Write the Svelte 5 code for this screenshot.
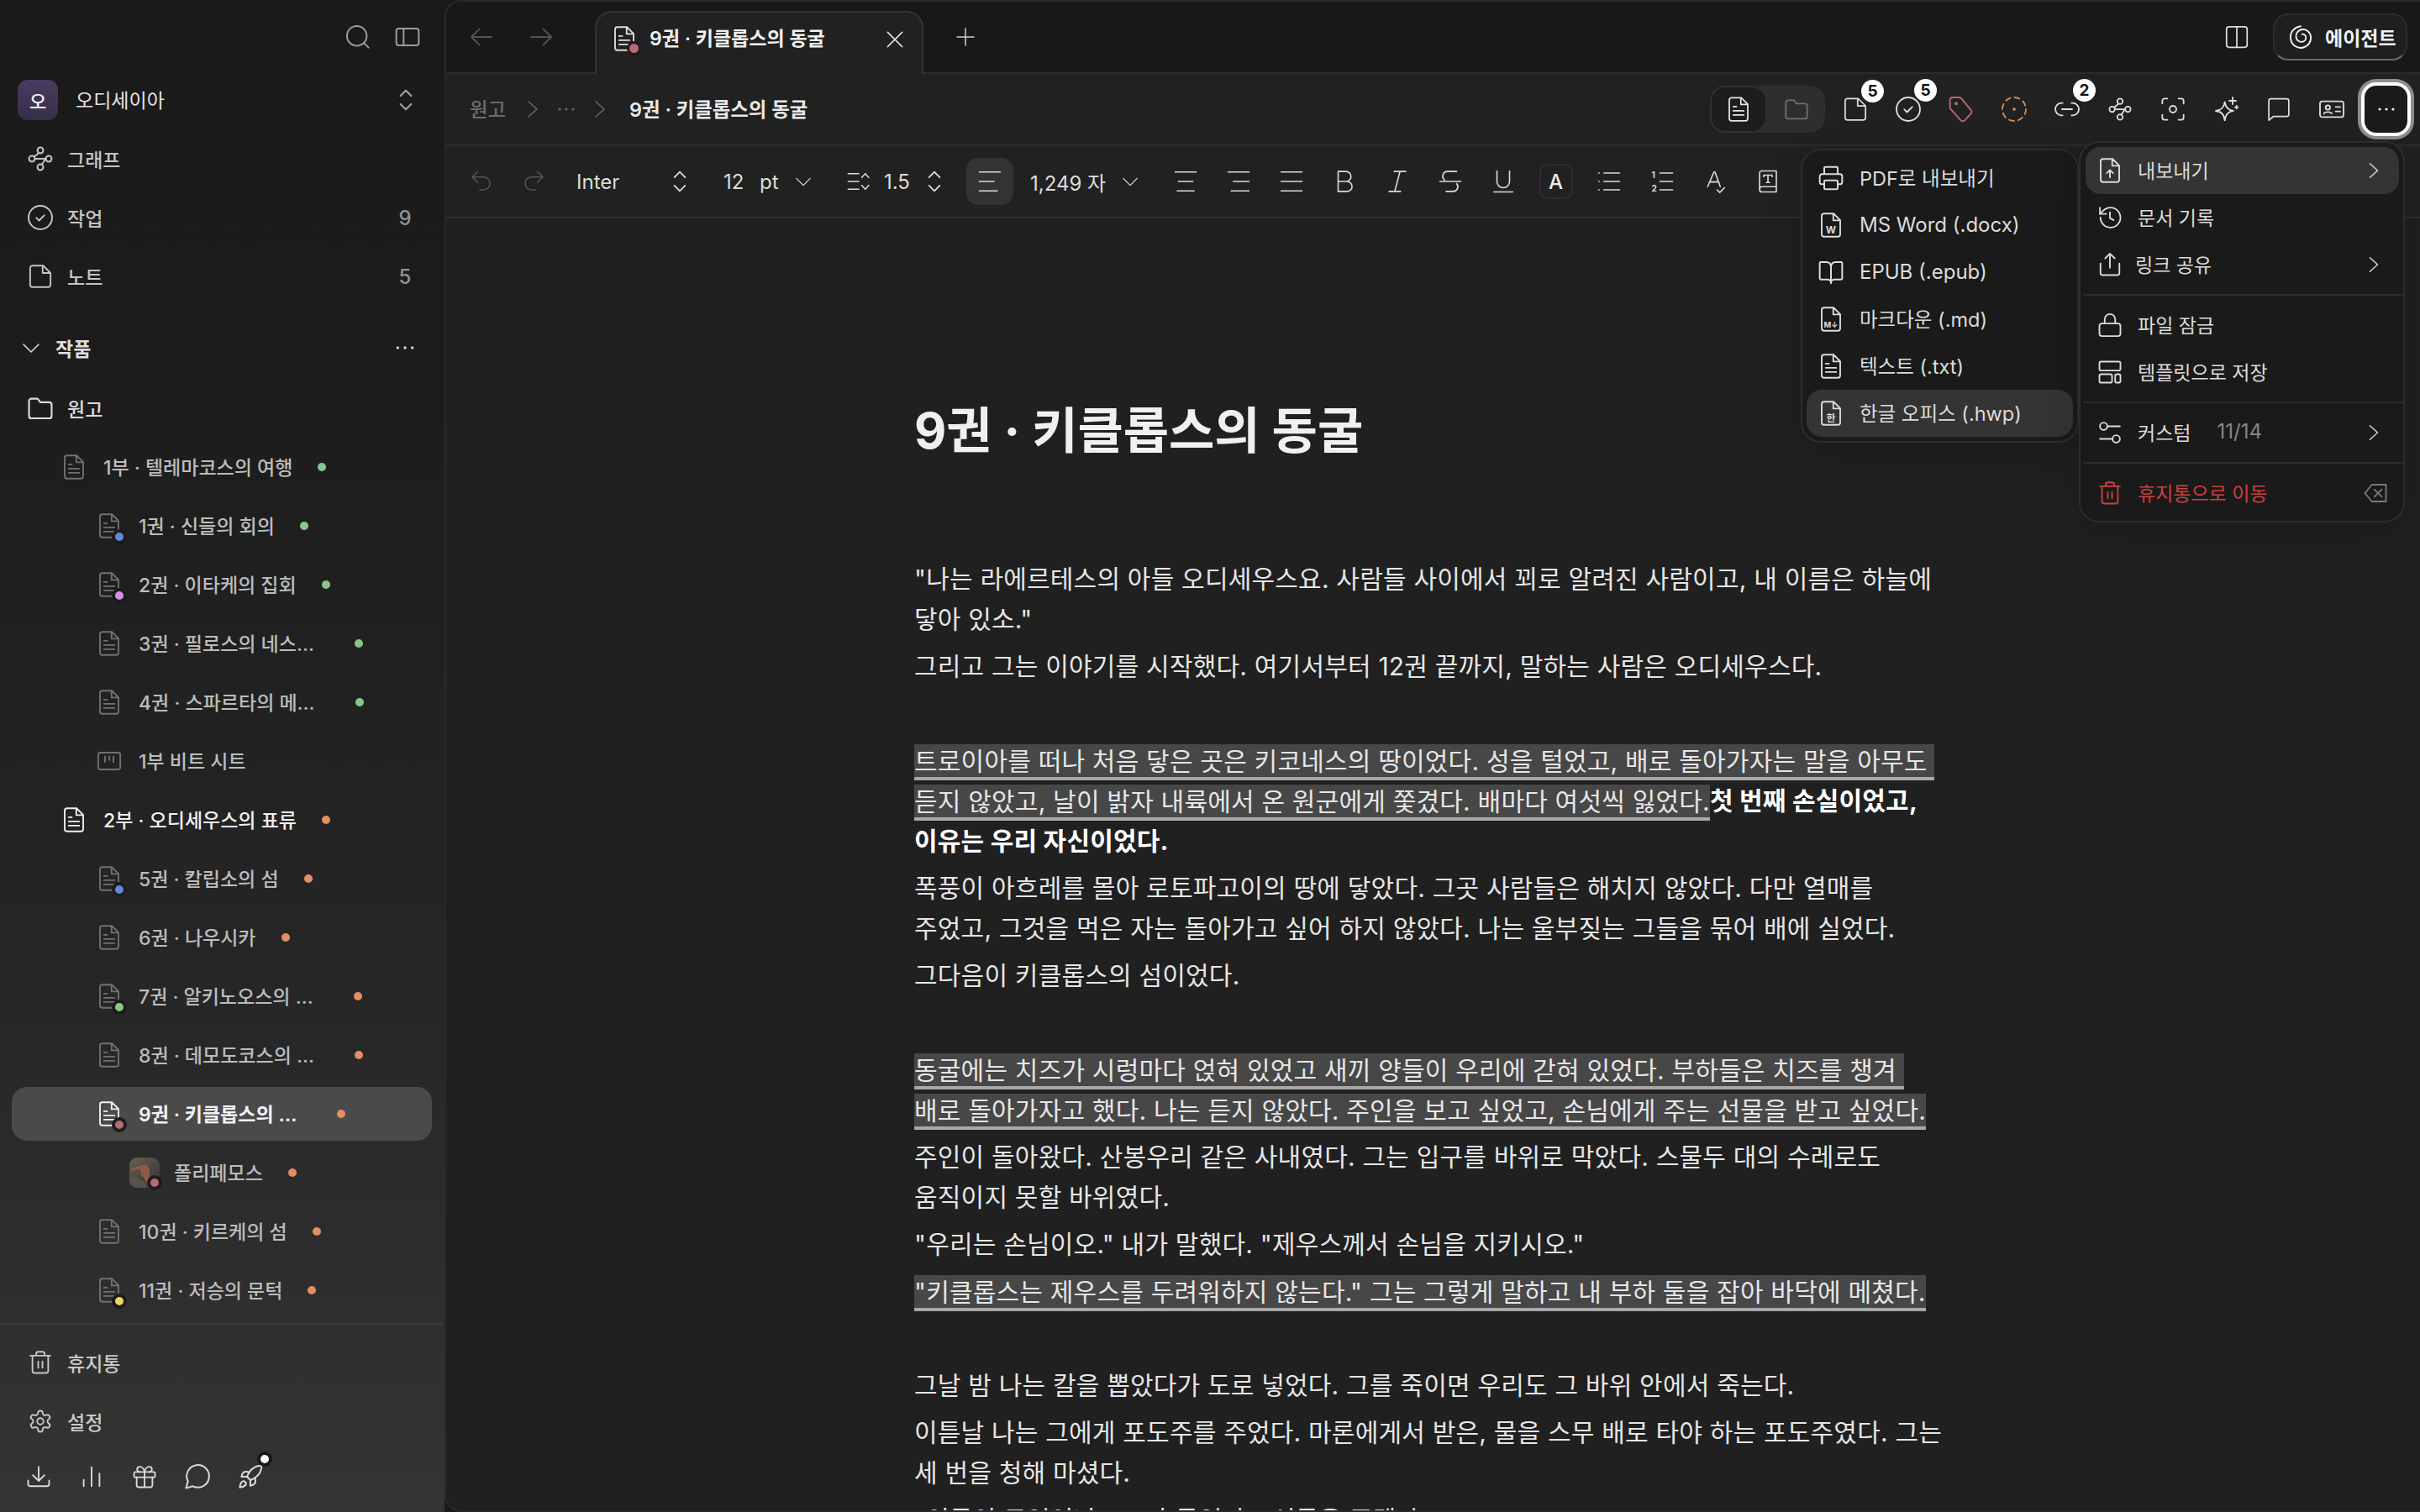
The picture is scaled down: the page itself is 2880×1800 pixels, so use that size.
<script>
  const shape = 'M5.400 1h9.100l6.300 6.300V20.800a2.200 2.200 0 0 1-2.200 2.200H5.400a2.200 2.200 0 0 1-2.200-2.200V3.200A2.200 2.200 0 0 1 5.400 1zM14.200 1v6.500h6.600';
  const I = {
    search: '<circle cx="11" cy="11" r="8.800"/><path d="M17.500 17.500 21.500 21.500"/>',
    panel: '<rect x="2" y="4.500" width="20" height="15" rx="2"/><path d="M8.500 4.500v15"/>',
    updown: '<path d="m7.500 8.500 4.500-4.500 4.500 4.500M7.500 15.500l4.500 4.500 4.500-4.500"/>',
    graph: '<circle cx="12" cy="4.500" r="2.600"/><circle cx="4.500" cy="12" r="2.600"/><circle cx="19.500" cy="12" r="2.600"/><circle cx="12" cy="19.500" r="2.600"/><path d="M7.100 12h9.800M10.600 6.700 7 10M16.500 12.400l-3.400 5"/>',
    check: '<circle cx="12" cy="12" r="10.500"/><path d="m8.500 12.300 2.400 2.300 4.600-4.600"/>',
    note: '<path d="M4.500 1.800h10.200l7 7V20a2.200 2.200 0 0 1-2.200 2.200h-15A2.200 2.200 0 0 1 2.300 20V4a2.200 2.200 0 0 1 2.200-2.200zM14.200 1.800v7h7.500"/>',
    folder: '<path d="M2.500 6a2 2 0 0 1 2-2h5.200l2.300 3h7.500a2 2 0 0 1 2 2v9.500a2 2 0 0 1-2 2h-15a2 2 0 0 1-2-2z"/>',
    doc: `<path d="${shape}M7 9.500h3M7 13.500h10M7 17.500h10"/>`,
    board: '<rect x="1.500" y="4" width="21" height="16" rx="2"/><path d="M8 7.500v5.500M12 7.500v3.500M16 7.500v5.500"/>',
    trash: '<path d="M2.500 5.500h19M8 5.500V3.800a2 2 0 0 1 2-2h4a2 2 0 0 1 2 2v1.700M4.500 5.500V20a2 2 0 0 0 2 2h11a2 2 0 0 0 2-2V5.500M10 11v6M14 11v6"/>',
    gear: '<path d="M12.220 2h-.44a2 2 0 0 0-2 2v.18a2 2 0 0 1-1 1.730l-.43.25a2 2 0 0 1-2 0l-.15-.08a2 2 0 0 0-2.730.73l-.22.38a2 2 0 0 0 .73 2.730l.15.1a2 2 0 0 1 1 1.720v.51a2 2 0 0 1-1 1.740l-.15.09a2 2 0 0 0-.73 2.730l.22.38a2 2 0 0 0 2.730.73l.15-.08a2 2 0 0 1 2 0l.43.25a2 2 0 0 1 1 1.730V20a2 2 0 0 0 2 2h.44a2 2 0 0 0 2-2v-.18a2 2 0 0 1 1-1.730l.43-.25a2 2 0 0 1 2 0l.15.08a2 2 0 0 0 2.730-.73l.22-.39a2 2 0 0 0-.73-2.730l-.15-.08a2 2 0 0 1-1-1.740v-.5a2 2 0 0 1 1-1.740l.15-.09a2 2 0 0 0 .73-2.730l-.22-.38a2 2 0 0 0-2.730-.73l-.15.08a2 2 0 0 1-2 0l-.43-.25a2 2 0 0 1-1-1.730V4a2 2 0 0 0-2-2z"/><circle cx="12" cy="12" r="3"/>',
    download: '<path d="M12 2.500v13M6.500 10.500l5.500 5.500 5.500-5.500M2 15.500V19a2 2 0 0 0 2 2h16a2 2 0 0 0 2-2v-3.500"/>',
    bars: '<path d="M4.500 21v-6M12 21V3M19.500 21V9"/>',
    gift: '<rect x="2" y="7.500" width="20" height="5" rx="1"/><path d="M12 7.500V22M4.500 12.500V20a2 2 0 0 0 2 2h11a2 2 0 0 0 2-2v-7.500M7.500 7.500a2.500 2.500 0 0 1 0-5C11 2.500 12 7.500 12 7.500s1-5 4.500-5a2.500 2.500 0 0 1 0 5"/>',
    bubble: '<path d="M7.900 20.500A10 10 0 1 0 3.500 16.100L1.800 22.200Z"/>',
    rocket: '<path d="M4.500 16.500c-1.500 1.260-2 5-2 5s3.740-.5 5-2c.71-.84.7-2.130-.09-2.910a2.180 2.180 0 0 0-2.910-.09z"/><path d="m12 15-3-3a22 22 0 0 1 2-3.950A12.880 12.880 0 0 1 22 2c0 2.720-.78 7.500-6 11a22.350 22.350 0 0 1-4 2z"/><path d="M9 12H4s.55-3.030 2-4c1.620-1.080 5 0 5 0M12 15v5s3.030-.55 4-2c1.080-1.620 0-5 0-5"/>',
    left: '<path d="M21 12H3M10 19l-7-7 7-7"/>',
    right: '<path d="M3 12h18M14 5l7 7-7 7"/>',
    x: '<path d="M4 4l16 16M20 4 4 20"/>',
    plus: '<path d="M12 2v20M2 12h20"/>',
    chevR: '<path d="m7 3 10 9-10 9"/>',
    chevD: '<path d="m3 8 9 9 9-9"/>',
    dots: '<circle cx="4" cy="12" r="1.600" fill="currentColor" stroke="none"/><circle cx="12" cy="12" r="1.600" fill="currentColor" stroke="none"/><circle cx="20" cy="12" r="1.600" fill="currentColor" stroke="none"/>',
    undo: '<path d="M9 13 3.500 7.500 9 2M3.500 7.500H15a6.500 6.500 0 0 1 0 13h-4"/>',
    redo: '<path d="m15 13 5.500-5.500L15 2M20.500 7.500H9a6.500 6.500 0 0 0 0 13h4"/>',
    lineh: '<path d="M2 4h11M2 12h11M2 20h11M16 8l3.500-4L23 8M16 16l3.500 4 3.500-4"/>',
    alignL: '<path d="M2 3h20M2 12h14M2 21h17"/>',
    alignC: '<path d="M2 3h20M5 12h14M4 21h16"/>',
    alignR: '<path d="M2 3h20M7 12h15M5 21h17"/>',
    alignJ: '<path d="M2 3h20M2 12h20M2 21h20"/>',
    bold: '<path d="M6 2.500h7.500a4.750 4.750 0 0 1 0 9.500H6zM6 12h8.500a4.750 4.750 0 0 1 0 9.500H6z"/>',
    italic: '<path d="M20 2.500H9M15 21.500H4M14.500 2.500 9.500 21.500"/>',
    strike: '<path d="M18 2.500H9.500a4.500 4.500 0 0 0-3 8M2 12h20M8 21.500h7a4.500 4.500 0 0 0 3-7.500"/>',
    under: '<path d="M6 2v10a6 6 0 0 0 12 0V2M3 22h18"/>',
    list: '<path d="M7 4h15M7 12h15M7 20h15M2 4h.5M2 12h.5M2 20h.5"/>',
    olist: '<path d="M10 4h12M10 12h12M10 20h12"/><text x="2" y="8.500" font-size="8" font-weight="700" fill="currentColor" stroke="none">1</text><text x="2" y="21.500" font-size="8" font-weight="700" fill="currentColor" stroke="none">2</text>',
    spell: '<path d="m17 17-5-14h-1L5 17M7 12.500h8M14 20l2.500 2.500L21 18"/>',
    bookT: '<path d="M4 19.500V4a2 2 0 0 1 2-2h14v20H6.500A2.500 2.500 0 0 1 4 19.500a2.500 2.500 0 0 1 2.500-2.500H20M8 6h8M12 6v7M10.500 13h3M8 6v1.500M16 6v1.500"/>',
    tag: '<path d="M4 1.500h6.500a2 2 0 0 1 1.400.6l8.700 10.500a2.400 2.400 0 0 1 0 3.400l-5.500 6a2.400 2.400 0 0 1-3.400 0L2.600 11.900A2 2 0 0 1 2 10.500V3.500a2 2 0 0 1 2-2z"/><circle cx="7.500" cy="7" r=".8" fill="currentColor"/>',
    target: '<circle cx="12" cy="12" r="10.500" stroke-dasharray="4.500 3.750"/><circle cx="12" cy="12" r="1.400" fill="currentColor" stroke="none"/>',
    linkd: '<path d="M8 6.500H7a5.500 5.500 0 0 0 0 11h1M16 6.500h1a5.500 5.500 0 0 1 0 11h-1M7.500 12h9"/>',
    focus: '<path d="M2.500 7V4.500a2 2 0 0 1 2-2H7M17 2.500h2.500a2 2 0 0 1 2 2V7M21.500 17v2.500a2 2 0 0 1-2 2H17M7 21.500H4.500a2 2 0 0 1-2-2V17"/><circle cx="12" cy="12" r="3"/>',
    spark: '<path d="M11 5.500c.7 5 2.800 7.300 7.500 8-4.700.7-6.800 3-7.500 8.500-.7-5.500-2.800-7.800-8-8.500 5.200-.7 7.300-3 8-8zM18 1.500v6M15 4.500h6M21.500 9v2.500M20.200 10.200h2.600"/>',
    comment: '<path d="M21.500 17a1.800 1.800 0 0 1-1.800 1.800H7L2.500 22.500V4a2 2 0 0 1 2-2h15a2 2 0 0 1 2 2z"/>',
    card: '<rect x="1.500" y="5" width="21" height="14" rx="2"/><circle cx="8.500" cy="10.500" r="2"/><path d="M5 16c.5-2 6.500-2 7 0M15.500 10h4M15.500 14h4"/>',
    split: '<rect x="1.500" y="1.500" width="21" height="21" rx="2.500"/><path d="M12 1.500v21"/>',
    spiral: '<path d="M12 1.800C5 3 1.500 8 2.500 14c1 6 6.500 9.500 12 8 5-1.400 8-6 7-11-.9-4.500-5-7-9-6-3.500.9-5.500 4.200-4.800 7.600.6 2.800 3.300 4.600 6 4 2.300-.6 3.600-2.700 3.200-4.800-.4-1.800-2-2.800-3.600-2.400"/>',
    fileup: `<path d="${shape}M12 18.500v-7M9 14.500l3-3 3 3"/>`,
    history: '<path d="M3 12a9.500 9.500 0 1 0 9.500-9.500A9.900 9.900 0 0 0 5.500 5.500L2.500 8.500"/><path d="M2.500 2.500v6h6M12 7v5.500l3.500 2"/>',
    share: '<path d="M12 15V1.500M7.500 6 12 1.500 16.500 6M3 11v9a2 2 0 0 0 2 2h14a2 2 0 0 0 2-2v-9"/>',
    lock: '<rect x="2" y="10.500" width="20" height="12" rx="2.500"/><path d="M7 10.500V6.500a5 5 0 0 1 10 0v4"/>',
    template: '<rect x="2" y="2" width="20" height="8.500" rx="1.500"/><rect x="2" y="14" width="12" height="8" rx="1.500"/><rect x="17" y="14" width="5" height="8" rx="1.500"/>',
    sliders: '<circle cx="6" cy="6" r="3.500"/><path d="M9.500 6h12M2.500 18h12"/><circle cx="18" cy="18" r="3.500"/>',
    backx: '<path d="M22 4H8.500L2 12l6.500 8H22z"/><path d="m11 8.500 7 7M18 8.500l-7 7"/>',
    printer: '<path d="M6 17.500H4a2 2 0 0 1-2-2v-5a2 2 0 0 1 2-2h16a2 2 0 0 1 2 2v5a2 2 0 0 1-2 2h-2M6 8.500V3a1 1 0 0 1 1-1h10a1 1 0 0 1 1 1v5.500"/><rect x="6" y="14" width="12" height="8" rx="1"/>',
    book: '<path d="M12 6.500V22M3 18.500a1 1 0 0 1-1-1V4a1 1 0 0 1 1-1h5a4 4 0 0 1 4 4 4 4 0 0 1 4-4h5a1 1 0 0 1 1 1v13.500a1 1 0 0 1-1 1h-6a3 3 0 0 0-3 3 3 3 0 0 0-3-3z"/>'
  };
  const docx = (t) => `<path d="${shape}"/><text x="12" y="20" text-anchor="middle" font-size="${t.length > 1 ? 7.500 : 9.500}" font-weight="700" fill="currentColor" stroke="none">${t}</text>`;
  I.word = docx('W');
  I.md = docx('M↓');
  I.hwp = docx('한');

  const top = [
    { icon: 'graph', label: '그래프', size: 32 },
    { icon: 'check', label: '작업', count: 9, size: 32 },
    { icon: 'note', label: '노트', count: 5, size: 30 }
  ];
  const g = 'green', o = 'orange';
  const tree = [
    { lv: 1, label: '1부 · 텔레마코스의 여행', dot: g },
    { lv: 2, label: '1권 · 신들의 회의', dot: g, badge: 'blue' },
    { lv: 2, label: '2권 · 이타케의 집회', dot: g, badge: 'purple' },
    { lv: 2, label: '3권 · 필로스의 네스…', dot: g },
    { lv: 2, label: '4권 · 스파르타의 메…', dot: g },
    { lv: 2, label: '1부 비트 시트', icon: 'board' },
    { lv: 1, label: '2부 · 오디세우스의 표류', dot: o, bright: true },
    { lv: 2, label: '5권 · 칼립소의 섬', dot: o, badge: 'blue' },
    { lv: 2, label: '6권 · 나우시카', dot: o },
    { lv: 2, label: '7권 · 알키노오스의 …', dot: o, badge: 'green' },
    { lv: 2, label: '8권 · 데모도코스의 …', dot: o },
    { lv: 2, label: '9권 · 키클롭스의 …', dot: o, badge: 'rose', active: true },
    { lv: 3, label: '폴리페모스', dot: o, badge: 'rose', thumb: true },
    { lv: 2, label: '10권 · 키르케의 섬', dot: o },
    { lv: 2, label: '11권 · 저승의 문턱', dot: o, badge: 'yellow' }
  ];
  const tools = ['alignC', 'alignR', 'alignJ', 'bold', 'italic', 'strike', 'under', 'A', 'list', 'olist', 'spell', 'bookT'];
  const exportItems = [
    { icon: 'printer', label: 'PDF로 내보내기', size: 32 },
    { icon: 'word', label: 'MS Word (.docx)', size: 30, latin: true },
    { icon: 'book', label: 'EPUB (.epub)', size: 32, latin: true },
    { icon: 'md', label: '마크다운 (.md)', size: 30 },
    { icon: 'doc', label: '텍스트 (.txt)', size: 30 },
    { icon: 'hwp', label: '한글 오피스 (.hwp)', size: 30, active: true }
  ];
</script>

{#snippet ic(name, size = 26, cls = '')}
  <svg class="ic {cls}" width={size} height={size} viewBox="0 0 24 24" fill="none" stroke="currentColor" stroke-width="1.500" stroke-linecap="round" stroke-linejoin="round">{@html I[name]}</svg>
{/snippet}

<div class="app">
  <aside class="side">
    <div class="sidehead">
      <span class="headbtn">{@render ic('search', 32)}</span>
      <span class="headbtn">{@render ic('panel', 32)}</span>
    </div>
    <div class="row work">
      <span class="avatar">오</span>
      <span class="wname">오디세이아</span>
      <span class="end dim">{@render ic('updown', 34)}</span>
    </div>
    {#each top as t}
      <div class="row nav">
        <span class="slot">{@render ic(t.icon, t.size)}</span>
        <span class="lbl">{t.label}</span>
        {#if t.count}<span class="end count">{t.count}</span>{/if}
      </div>
    {/each}
    <div class="row section">
      {@render ic('chevD', 24)}
      <span class="seclbl">작품</span>
      <span class="end secdots">{@render ic('dots', 26)}</span>
    </div>
    <div class="row nav wongo">
      <span class="slot">{@render ic('folder', 34)}</span>
      <span class="lbl">원고</span>
    </div>
    <div class="tree">
      {#each tree as n}
        <div class="row node lv{n.lv}" class:active={n.active} class:bright={n.bright}>
          <span class="nicon">
            {#if n.thumb}
              <svg class="thumb" width="36" height="36" viewBox="0 0 36 36">
                <defs><linearGradient id="pg" x1="0" y1="0" x2="1" y2="1"><stop offset="0" stop-color="#6a6052"/><stop offset=".55" stop-color="#4a4640"/><stop offset="1" stop-color="#3b3a38"/></linearGradient></defs>
                <rect width="36" height="36" rx="9" fill="url(#pg)"/>
                <path d="M2 13 10 11 15 9 20 8 24 14 24 24 26 32 21 32 18 25 14 21 13 14 8 14 3 16Z" fill="#8e5a48"/>
                <path d="M0 26c6-4 12 0 18 3l2 7H9a9 9 0 0 1-9-9z" fill="#56544f"/>
              </svg>
            {:else}
              {@render ic(n.icon || 'doc', 30)}
            {/if}
            {#if n.badge}<i class="badge {n.badge}"></i>{/if}
          </span>
          <span class="nlbl">{n.label}</span>
          {#if n.dot}<i class="dot {n.dot}" class:far={n.label.endsWith('…')}></i>{/if}
        </div>
      {/each}
    </div>
    <div class="sidefoot">
      <div class="row nav">
        <span class="slot">{@render ic('trash', 30)}</span>
        <span class="lbl">휴지통</span>
      </div>
      <div class="row nav">
        <span class="slot">{@render ic('gear', 30)}</span>
        <span class="lbl">설정</span>
      </div>
      <div class="bottom">
        <span>{@render ic('download', 30)}</span>
        <span>{@render ic('bars', 30)}</span>
        <span>{@render ic('gift', 30)}</span>
        <span>{@render ic('bubble', 32)}</span>
        <span>{@render ic('rocket', 32)}<i class="notif"></i></span>
      </div>
    </div>
  </aside>

  <main class="main">
    <header class="tabbar">
      <span class="navbtn">{@render ic('left', 32)}</span>
      <span class="navbtn">{@render ic('right', 32)}</span>
      <div class="tab">
        <span class="tabicon">{@render ic('doc', 30)}<i class="badge rose"></i></span>
        <span class="tabtitle">9권 · 키클롭스의 동굴</span>
        <span class="tabx">{@render ic('x', 26)}</span>
      </div>
      <span class="plus">{@render ic('plus', 24)}</span>
      <span class="splitbtn">{@render ic('split', 28)}</span>
      <button class="agent">{@render ic('spiral', 30)}<span>에이전트</span></button>
    </header>

    <div class="crumbs">
      <span class="cr1">원고</span>
      <span class="crslot">{@render ic('chevR', 24)}</span>
      <span class="crslot">{@render ic('dots', 24)}</span>
      <span class="crslot">{@render ic('chevR', 24)}</span>
      <span class="crtitle">9권 · 키클롭스의 동굴</span>
      <div class="actions">
        <div class="seg">
          <span class="segon">{@render ic('doc', 30)}</span>
          <span class="segoff">{@render ic('folder', 32)}</span>
        </div>
        <span class="act">{@render ic('note', 30)}<b>5</b></span>
        <span class="act">{@render ic('check', 32)}<b>5</b></span>
        <span class="act rose-c">{@render ic('tag', 32)}</span>
        <span class="act orange-c">{@render ic('target', 32)}</span>
        <span class="act">{@render ic('linkd', 32)}<b>2</b></span>
        <span class="act">{@render ic('graph', 30)}</span>
        <span class="act">{@render ic('focus', 32)}</span>
        <span class="act">{@render ic('spark', 32)}</span>
        <span class="act">{@render ic('comment', 30)}</span>
        <span class="act">{@render ic('card', 32)}</span>
        <span class="more">{@render ic('dots', 24)}</span>
      </div>
    </div>

    <div class="toolbar">
      <span class="tslot off">{@render ic('undo', 28)}</span>
      <span class="tslot off">{@render ic('redo', 28)}</span>
      <span class="tfont">Inter</span>
      <span class="cslot">{@render ic('updown', 34)}</span>
      <span class="tsize">12</span>
      <span class="tpt">pt</span>
      <span class="cslot">{@render ic('chevD', 22)}</span>
      <span class="cslot tline">{@render ic('lineh', 28)}</span>
      <span class="tlh">1.5</span>
      <span class="cslot">{@render ic('updown', 34)}</span>
      <span class="talign">{@render ic('alignL', 30)}</span>
      <span class="tcount">1,249 자</span>
      <span class="cslot">{@render ic('chevD', 22)}</span>
      <div class="ttools">
        {#each tools as t}
          <span class="tool">
            {#if t === 'A'}<span class="abox">A</span>{:else}{@render ic(t, 30)}{/if}
          </span>
        {/each}
      </div>
    </div>

    <article class="doc">
      <h1>9권 · 키클롭스의 동굴</h1>
      <p>"나는 라에르테스의 아들 오디세우스요. 사람들 사이에서 꾀로 알려진 사람이고, 내 이름은 하늘에 닿아 있소."</p>
      <p>그리고 그는 이야기를 시작했다. 여기서부터 12권 끝까지, 말하는 사람은 오디세우스다.</p>
      <p class="blank"></p>
      <p><mark>트로이아를 떠나 처음 닿은 곳은 키코네스의 땅이었다. 성을 털었고, 배로 돌아가자는 말을 아무도 듣지 않았고, 날이 밝자 내륙에서 온 원군에게 쫓겼다. 배마다 여섯씩 잃었다. </mark><strong>첫 번째 손실이었고, 이유는 우리 자신이었다.</strong></p>
      <p>폭풍이 아흐레를 몰아 로토파고이의 땅에 닿았다. 그곳 사람들은 해치지 않았다. 다만 열매를 주었고, 그것을 먹은 자는 돌아가고 싶어 하지 않았다. 나는 울부짖는 그들을 묶어 배에 실었다.</p>
      <p>그다음이 키클롭스의 섬이었다.</p>
      <p class="blank"></p>
      <p><mark>동굴에는 치즈가 시렁마다 얹혀 있었고 새끼 양들이 우리에 갇혀 있었다. 부하들은 치즈를 챙겨 배로 돌아가자고 했다. 나는 듣지 않았다. 주인을 보고 싶었고, 손님에게 주는 선물을 받고 싶었다.</mark></p>
      <p>주인이 돌아왔다. 산봉우리 같은 사내였다. 그는 입구를 바위로 막았다. 스물두 대의 수레로도 움직이지 못할 바위였다.</p>
      <p>"우리는 손님이오." 내가 말했다. "제우스께서 손님을 지키시오."</p>
      <p><mark>"키클롭스는 제우스를 두려워하지 않는다." 그는 그렇게 말하고 내 부하 둘을 잡아 바닥에 메쳤다.</mark></p>
      <p class="blank"></p>
      <p>그날 밤 나는 칼을 뽑았다가 도로 넣었다. 그를 죽이면 우리도 그 바위 안에서 죽는다.</p>
      <p>이튿날 나는 그에게 포도주를 주었다. 마론에게서 받은, 물을 스무 배로 타야 하는 포도주였다. 그는 세 번을 청해 마셨다.</p>
      <p>"이름이 무엇이냐." 그가 물었다. "선물을 주겠다."</p>
    </article>
  </main>

  <div class="menu menu-export">
    {#each exportItems as m}
      <div class="mi" class:on={m.active}>
        <span class="mic">{@render ic(m.icon, m.size)}</span>
        <span class="t" class:latin={m.latin}>{m.label}</span>
      </div>
    {/each}
  </div>

  <div class="menu menu-more">
    <div class="mi on">
      <span class="mic">{@render ic('fileup', 30)}</span><span class="t ko">내보내기</span>
      <span class="mend">{@render ic('chevR', 22)}</span>
    </div>
    <div class="mi"><span class="mic">{@render ic('history', 30)}</span><span class="t ko">문서 기록</span></div>
    <div class="mi">
      <span class="mic">{@render ic('share', 30)}</span><span class="t ko nudge">링크 공유</span>
      <span class="mend">{@render ic('chevR', 22)}</span>
    </div>
    <hr />
    <div class="mi"><span class="mic">{@render ic('lock', 30)}</span><span class="t ko">파일 잠금</span></div>
    <div class="mi"><span class="mic">{@render ic('template', 30)}</span><span class="t ko">템플릿으로 저장</span></div>
    <hr />
    <div class="mi">
      <span class="mic">{@render ic('sliders', 30)}</span><span class="t ko">커스텀</span><span class="t frac">11/14</span>
      <span class="mend">{@render ic('chevR', 22)}</span>
    </div>
    <hr />
    <div class="mi danger">
      <span class="mic">{@render ic('trash', 30)}</span><span class="t ko">휴지통으로 이동</span>
      <span class="mend gray">{@render ic('backx', 30)}</span>
    </div>
  </div>
</div>

<style>
  :global(body) {
    margin: 0;
    background: #1a1a1a;
  }
  .app {
    position: relative;
    display: flex;
    width: 2880px;
    height: 1800px;
    overflow: hidden;
    font-family: Inter, "Noto Sans CJK KR", sans-serif;
    font-size: 24px;
    color: #e6e6e6;
  }
  .ic {
    display: block;
    flex: none;
  }

  /* sidebar */
  .side {
    width: 529px;
    flex: none;
    display: flex;
    flex-direction: column;
    background: linear-gradient(180deg, #1a1a1a 0%, #1c1c1c 25%, #262626 65%, #343434 100%);
    color: #c4c4c4;
    font-size: 23px;
  }
  .sidehead {
    height: 87px;
    display: flex;
    justify-content: flex-end;
    align-items: center;
    gap: 7px;
    padding-right: 18px;
    color: #9c9c9c;
    box-sizing: border-box;
  }
  .headbtn {
    width: 52px;
    display: flex;
    justify-content: center;
  }
  .row {
    height: 64px;
    margin-bottom: 6px;
    display: flex;
    align-items: center;
    flex: none;
    box-sizing: border-box;
  }
  .end {
    margin-left: auto;
  }
  .work {
    padding: 0 29px 0 21px;
    color: #e4e4e4;
  }
  .avatar {
    width: 48px;
    height: 48px;
    border-radius: 12px;
    background: linear-gradient(180deg, #493c62, #372e49);
    display: flex;
    align-items: center;
    justify-content: center;
    font-size: 22px;
    font-weight: 500;
    color: #f2f2f2;
  }
  .wname {
    margin-left: 21px;
    margin-bottom: 2px;
  }
  .dim {
    color: #a0a0a0;
  }
  .nav {
    padding: 0 34px 0 34px;
  }
  .slot {
    width: 28px;
    flex: none;
    display: flex;
    justify-content: center;
  }
  .lbl {
    margin-left: 18px;
    font-weight: 500;
  }
  .count {
    width: 30px;
    text-align: center;
    color: #929292;
    font-size: 24px;
    font-weight: 500;
    margin-right: -2px;
  }
  .section {
    margin-top: 15px;
    margin-bottom: 8px;
    padding: 0 34px 0 25px;
    color: #dedede;
  }
  .seclbl {
    margin-left: 17px;
    font-weight: 700;
  }
  .secdots {
    color: #d8d8d8;
  }
  .wongo {
    color: #dcdcdc;
  }
  .tree {
    flex: 1;
    overflow: hidden;
    border-bottom: 2px solid #3c3c3c;
    margin-right: 2px;
  }
  .node {
    position: relative;
    margin: 0 13px 6px 14px;
    border-radius: 18px;
    font-weight: 500;
  }
  .node.lv1 {
    padding-left: 60px;
  }
  .node.lv2 {
    padding-left: 102px;
  }
  .node.lv3 {
    padding-left: 140px;
  }
  .nicon {
    position: relative;
    color: #717171;
    width: 28px;
    flex: none;
    display: flex;
    justify-content: center;
  }
  .lv3 .nicon {
    width: 36px;
  }
  .nlbl {
    margin-left: 21px;
    margin-bottom: 2px;
    color: #bcbcbc;
    white-space: nowrap;
  }
  .lv3 .nlbl {
    margin-left: 17px;
  }
  .bright .nlbl,
  .bright .nicon {
    color: #f0f0f0;
  }
  .active {
    background: #4a4a4a;
  }
  .active .nlbl {
    color: #f2f2f2;
    font-weight: 600;
  }
  .active .nicon {
    color: #f0f0f0;
  }
  .thumb {
    display: block;
  }
  .dot {
    width: 10px;
    height: 10px;
    border-radius: 50%;
    margin-left: 30px;
    flex: none;
  }
  .dot.far {
    margin-left: 48px;
  }
  .dot.green {
    background: #87c88a;
  }
  .dot.orange {
    background: #e58e60;
  }
  .badge {
    position: absolute;
    right: -7px;
    bottom: -7px;
    width: 10px;
    height: 10px;
    border-radius: 50%;
    border: 4px solid #1c1c1c;
  }
  .lv3 .badge {
    right: -3px;
    bottom: -3px;
  }
  .badge.blue {
    background: #5e8ad8;
  }
  .badge.purple {
    background: #d88fea;
  }
  .badge.green {
    background: #87c88a;
  }
  .badge.rose {
    background: #b96b74;
  }
  .badge.yellow {
    background: #f2d262;
  }
  .sidefoot {
    flex: none;
    padding: 13px 0 26px;
    color: #c8c8c8;
  }
  .bottom {
    display: flex;
    align-items: center;
    height: 32px;
    padding-left: 14px;
    margin-top: 18px;
    color: #dadada;
  }
  .bottom span {
    width: 63px;
    display: flex;
    justify-content: center;
    position: relative;
  }
  .notif {
    position: absolute;
    left: 40px;
    top: -14px;
    width: 10px;
    height: 10px;
    background: #fff;
    border-radius: 50%;
    border: 4px solid #181818;
  }

  /* main */
  .main {
    flex: 1;
    min-width: 0;
    display: flex;
    flex-direction: column;
    background: #202020;
    border: 2px solid #29292c;
    border-right: 0;
    border-radius: 20px 0 0 20px;
    overflow: hidden;
    box-sizing: border-box;
  }
  .tabbar {
    height: 84px;
    flex: none;
    display: flex;
    align-items: center;
    background: #181818;
    border-bottom: 2px solid #2c2c30;
    padding-left: 6px;
    color: #e0e0e0;
  }
  .navbtn {
    width: 71px;
    display: flex;
    justify-content: center;
    color: #545454;
  }
  .tab {
    align-self: flex-end;
    height: 75px;
    width: 391px;
    margin: 0 0 -2px 29px;
    box-sizing: border-box;
    display: flex;
    align-items: center;
    background: #212121;
    border: 2px solid #333336;
    border-bottom: 0;
    border-radius: 20px 20px 0 0;
    padding: 0 0 12px 18px;
  }
  .tabicon {
    position: relative;
    display: block;
    color: #dedede;
  }
  .tabicon .badge {
    right: -5px;
    bottom: -5px;
    width: 11px;
    height: 11px;
    border-width: 3px;
  }
  .tabtitle {
    margin-left: 15px;
    font-size: 23px;
    font-weight: 600;
    color: #f0f0f0;
    white-space: nowrap;
    margin-bottom: 4px;
  }
  .tabx {
    margin-left: auto;
    margin-right: 19px;
    color: #dedede;
    margin-top: 2px;
  }
  .plus {
    margin-left: 38px;
    color: #d0d0d0;
  }
  .splitbtn {
    margin-left: auto;
    margin-right: 29px;
    color: #dedede;
  }
  .agent {
    width: 160px;
    height: 56px;
    margin-right: 15px;
    padding: 0 0 0 16px;
    display: flex;
    align-items: center;
    gap: 14px;
    background: #1f1f1f;
    border: 2px solid #2d2d2d;
    border-bottom-color: #6a6a6a;
    border-radius: 18px;
    font: 700 23px Inter, "Noto Sans CJK KR", sans-serif;
    color: #f0f0f0;
    box-sizing: border-box;
  }
  .crumbs {
    height: 84px;
    flex: none;
    display: flex;
    align-items: center;
    background: #212121;
    border-bottom: 2px solid #2c2c30;
    padding-left: 28px;
    color: #e8e8e8;
    font-size: 23.400px;
  }
  .cr1 {
    color: #6c6c6c;
    font-weight: 500;
    margin-right: 12px;
    margin-bottom: 2px;
  }
  .crslot {
    width: 40px;
    display: flex;
    justify-content: center;
    color: #6a6a6a;
  }
  .crtitle {
    margin-left: 15px;
    font-weight: 600;
    white-space: nowrap;
    margin-bottom: 2px;
  }
  .actions {
    margin-left: auto;
    display: flex;
    align-items: center;
    padding-right: 15px;
  }
  .actions .ic {
    stroke-width: 1.400;
  }
  .seg {
    display: flex;
    width: 137px;
    height: 56px;
    background: #2e2e2e;
    border-radius: 18px;
    margin-right: 4px;
  }
  .segon {
    width: 68px;
    background: #1d1d1d;
    border: 2px solid #303034;
    border-radius: 18px;
    display: flex;
    align-items: center;
    justify-content: center;
    box-sizing: border-box;
    color: #e6e6e6;
  }
  .segoff {
    flex: 1;
    display: flex;
    align-items: center;
    justify-content: center;
    color: #6e6e6e;
  }
  .act {
    position: relative;
    width: 63px;
    display: flex;
    justify-content: center;
    color: #dedede;
  }
  .act b {
    position: absolute;
    left: 39px;
    top: -20px;
    width: 27px;
    height: 27px;
    border-radius: 50%;
    background: #fff;
    color: #111;
    font-size: 19px;
    font-weight: 700;
    display: flex;
    align-items: center;
    justify-content: center;
  }
  .rose-c {
    color: #b56a72;
  }
  .orange-c {
    color: #d88c50;
  }
  .more {
    width: 51px;
    height: 56px;
    margin-left: 8px;
    display: flex;
    align-items: center;
    justify-content: center;
    background: #1b1b1b;
    border-radius: 14px;
    box-shadow: 0 0 0 4px #fff, 0 0 0 8px #8d8d8d;
    color: #f0f0f0;
  }
  .toolbar {
    height: 84px;
    flex: none;
    display: flex;
    align-items: center;
    background: #212121;
    border-bottom: 2px solid #2c2c30;
    padding-left: 9px;
    color: #dcdcdc;
    white-space: nowrap;
  }
  .toolbar .ic {
    stroke-width: 1.300;
  }
  .tslot {
    width: 64px;
    display: flex;
    justify-content: center;
  }
  .off {
    color: #555;
  }
  .tfont {
    margin-left: 18px;
    width: 103px;
  }
  .cslot {
    width: 40px;
    display: flex;
    justify-content: center;
  }
  .tsize {
    margin-left: 32px;
    width: 43px;
  }
  .tpt {
    width: 32px;
  }
  .tline {
    margin-left: 25px;
  }
  .tlh {
    margin-left: 11px;
    width: 40px;
  }
  .talign {
    margin: 0 20px 0 18px;
    width: 56px;
    height: 56px;
    border-radius: 14px;
    background: #333;
    display: flex;
    align-items: center;
    justify-content: center;
  }
  .tcount {
    width: 99px;
  }
  .ttools {
    display: flex;
    margin-left: 14px;
  }
  .tool {
    width: 63px;
    display: flex;
    justify-content: center;
    align-items: center;
  }
  .abox {
    width: 40px;
    height: 42px;
    border: 2px solid #2d2d31;
    border-radius: 10px;
    box-sizing: border-box;
    display: flex;
    align-items: center;
    justify-content: center;
    font-size: 24px;
    font-weight: 500;
    color: #eee;
  }
  .doc {
    flex: 1;
    min-height: 0;
    overflow: hidden;
    padding: 217px 0 0 557px;
    background: #202020;
  }
  h1 {
    margin: 0 0 116px;
    font-size: 59px;
    line-height: 72px;
    font-weight: 700;
    color: #f0f0f0;
  }
  p {
    margin: 0 0 8px;
    width: 1226px;
    font-size: 30px;
    line-height: 48px;
    letter-spacing: 0.2px;
    color: #e6e6e6;
    word-break: keep-all;
    white-space: pre-wrap;
  }
  .blank {
    height: 48px;
  }
  mark {
    background: #474747;
    color: #e6e6e6;
    padding: 1.500px 0;
    border-bottom: 4px solid #a8a8a8;
  }
  strong {
    font-weight: 700;
    color: #fff;
  }

  /* menus */
  .menu {
    position: absolute;
    box-sizing: border-box;
    background: #1a1a1a;
    border: 2px solid #2c2c2c;
    border-radius: 24px;
    box-shadow: 0 12px 48px rgba(0, 0, 0, 0.18);
    color: #dcdcdc;
  }
  .menu-export {
    left: 2143px;
    top: 177px;
    width: 331px;
    height: 350px;
    padding: 5px;
  }
  .menu-more {
    left: 2474px;
    top: 168px;
    width: 388px;
    height: 454px;
    padding: 5px 5px 5px 6px;
  }
  .mi {
    height: 56px;
    border-radius: 18px;
    display: flex;
    align-items: center;
    white-space: nowrap;
  }
  .mi.on {
    background: #343434;
  }
  .mic {
    width: 28px;
    flex: none;
    margin: 0 20px 0 15px;
    display: flex;
    justify-content: center;
  }
  .menu-more .mic {
    margin: 0 19px 0 15px;
  }
  .t {
    font-size: 23.500px;
    margin-bottom: 3px;
  }
  .t.latin {
    font-size: 24px;
    margin-bottom: 1px;
  }
  .t.ko {
    font-size: 23px;
  }
  .t.nudge {
    margin-left: -3px;
  }
  .mend {
    margin-left: auto;
    margin-right: 19px;
  }
  .mend.gray {
    margin-right: 13px;
    color: #777;
  }
  .t.frac {
    margin-left: 31px;
    font-size: 24px;
    color: #878787;
  }
  .danger {
    color: #c9423c;
  }
  hr {
    border: 0;
    border-top: 2px solid #2b2b2d;
    margin: 7px -5px 7px -3px;
    height: 0;
  }
</style>
